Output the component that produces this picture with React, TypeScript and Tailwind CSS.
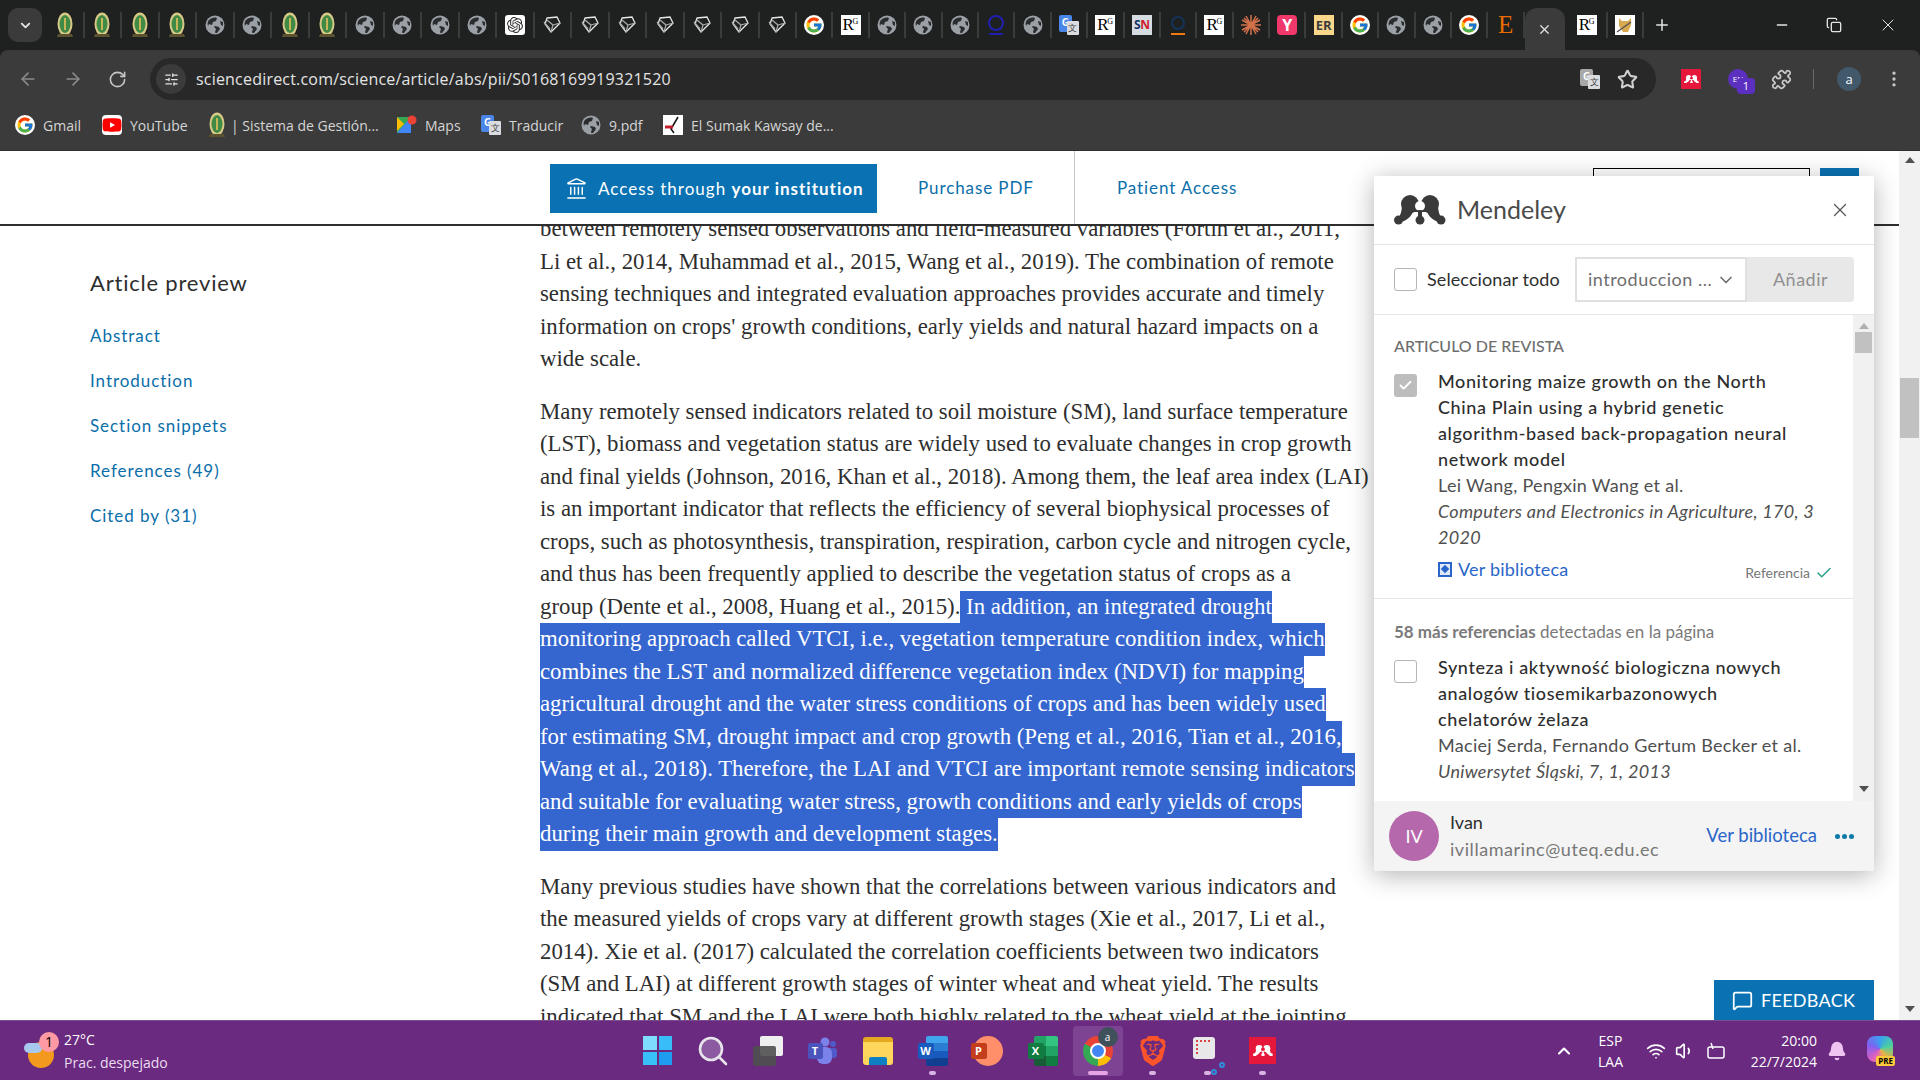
import { ArrowLeft, ArrowRight, RotateCw, Star, EllipsisVertical, Minus, Plus, X, Copy, ChevronDown, ChevronUp, Check, MessageSquare, Wifi, Volume1, Bell, Puzzle, SlidersHorizontal, Landmark } from "lucide-react";
import { SiBrave, SiOpenai } from "react-icons/si";
import { FcGoogle } from "react-icons/fc";
import { FaYoutube } from "react-icons/fa";

function Globe() {
  return (
    <svg width="20" height="20" viewBox="0 0 20 20">
      <circle cx="10" cy="10" r="9.5" fill="#9aa0a6" />
      <path d="M4 5c2-2 5-3 8-2l-1 3-3 1-1 3-3-1-1 2C2 8 3 6 4 5zM10 11l4 1 1 2-3 4c-1 0-2 0-2-1l1-3-2-2zM15 6l3 1 0 4-2-1z" fill="#2b2c2e" />
    </svg>
  );
}

function Seal() {
  return (
    <svg width="20" height="26" viewBox="0 0 20 26">
      <ellipse cx="10" cy="12" rx="7.5" ry="11.5" fill="#d9c987" />
      <ellipse cx="10" cy="12" rx="5.5" ry="9" fill="#3f8a45" />
      <path d="M10 6v12" stroke="#c9b458" strokeWidth="2" />
      <path d="M3 22h14l1 3H2z" fill="#5b5230" />
    </svg>
  );
}

function GoogleIcon() {
  return (
    <div className="flex items-center justify-center w-5 h-5 rounded-full bg-white">
      <FcGoogle size={18} />
    </div>
  );
}

function Rg() {
  return (
    <div className="relative w-5 h-5 bg-white text-black text-[17px] leading-5 pl-[2px] [font-family:'Liberation_Serif',serif]">
      R<span className="absolute left-[12px] top-[-3px] text-[8px]">G</span>
    </div>
  );
}

function Diamond() {
  return (
    <svg width="20" height="20" viewBox="0 0 20 20" fill="none" stroke="#e8e8e8" strokeWidth="1.3">
      <path d="M5 3l10-1 3 6-9 9-6-8z" />
      <path d="M5 5l6 5-2 7M2 7l6 7M18 8l-7 2" stroke="#a8a8a8" />
    </svg>
  );
}

function TranslateIcon({ grey }: { grey?: boolean }) {
  return (
    <div className="relative w-5 h-5">
      <div className={`absolute left-0 top-0 w-[13px] h-[17px] rounded-[2px] text-white text-[10px] leading-[15px] text-center font-bold ${grey ? "bg-[#a8a8a8]" : "bg-[#4a86e8]"}`}>G</div>
      <div className="absolute right-0 bottom-0 w-[12px] h-[14px] bg-[#dadce0] rounded-[1px] text-[#444] text-[9px] leading-[14px] text-center">文</div>
    </div>
  );
}

function MendeleyMark({ color, bg = "#fff", size = 52 }: { color: string; bg?: string; size?: number }) {
  return (
    <svg width={size} height={size * 0.58} viewBox="0 0 52 30">
      <circle cx="4.5" cy="25" r="4.5" fill={color} />
      <circle cx="26" cy="25" r="4.5" fill={color} />
      <circle cx="47" cy="25" r="4.5" fill={color} />
      <circle cx="16" cy="9" r="9" fill={color} />
      <circle cx="36" cy="9" r="9" fill={color} />
      <path d="M8 9c0 8-2 13-5 15l4 3c7-2 10-6 12-10h14c2 4 5 8 12 10l4-3c-3-2-5-7-5-15z" fill={color} />
      <circle cx="26" cy="11" r="5" fill={bg} />
      <path d="M26 15v9" stroke={color} strokeWidth="4" />
    </svg>
  );
}

function RedMendeley() {
  return (
    <div className="flex items-center justify-center w-5 h-5 bg-[#e5173b]">
      <MendeleyMark color="#fff" bg="#e5173b" size={15} />
    </div>
  );
}

function Favicon({ kind }: { kind: string }) {
  if (kind == "seal") return <Seal />;
  if (kind == "globe") return <Globe />;
  if (kind == "gpt")
    return (
      <div className="flex items-center justify-center w-5 h-5 bg-white rounded-[3px] text-[#333]">
        <SiOpenai size={16} />
      </div>
    );
  if (kind == "diamond") return <Diamond />;
  if (kind == "g") return <GoogleIcon />;
  if (kind == "rg") return <Rg />;
  if (kind == "tr") return <TranslateIcon />;
  if (kind == "hat")
    return (
      <svg width="20" height="22" viewBox="0 0 20 22" fill="none" stroke="#2020b0" strokeWidth="2">
        <circle cx="10" cy="9" r="7" />
        <path d="M3 20h14" />
      </svg>
    );
  if (kind == "sn")
    return (
      <div className="w-5 h-5 bg-[#d5dde3] text-[12px] leading-5 text-center font-bold tracking-tighter">
        <span className="text-[#14336b]">S</span>
        <span className="text-[#d01c2c]">N</span>
      </div>
    );
  if (kind == "dark")
    return (
      <svg width="20" height="22" viewBox="0 0 20 22" fill="none">
        <circle cx="10" cy="9" r="6" stroke="#12345a" strokeWidth="2" />
        <path d="M3 20h14" stroke="#f07a10" strokeWidth="2" />
      </svg>
    );
  if (kind == "star")
    return (
      <svg width="20" height="20" viewBox="0 0 20 20" stroke="#d2714a" strokeWidth="1.5">
        <path d="M10 0v20M0 10h20M3 3l14 14M17 3L3 17M5 1l10 18M15 1L5 19M1 5l18 10M19 5L1 15" />
      </svg>
    );
  if (kind == "y") return <div className="w-5 h-5 rounded-[4px] bg-[#f0386b] text-white text-[16px] leading-5 text-center font-bold">Y</div>;
  if (kind == "er") return <div className="w-5 h-5 bg-[#f8d68a] text-[#3b3b3b] text-[13px] leading-5 text-center font-bold">ER</div>;
  if (kind == "e") return <div className="w-5 h-6 text-[#e96a00] text-[25px] leading-6 text-center [font-family:'Liberation_Serif',serif]">E</div>;
  return (
    <div className="flex items-center justify-center w-5 h-5 bg-white">
      <svg width="18" height="20" viewBox="0 0 18 20">
        <path d="M3 3l3 3h6l3-3v7l-3 7H7l-4-6z" fill="#d9a94f" />
        <path d="M1 17l14-10" stroke="#555" strokeWidth="1.5" />
      </svg>
    </div>
  );
}

const firstTabs = ["seal", "seal", "seal", "seal", "globe", "globe", "seal", "seal", "globe", "globe", "globe", "globe", "gpt", "diamond", "diamond", "diamond", "diamond", "diamond", "diamond", "diamond"];
const secondTabs = ["g", "rg", "globe", "globe", "globe", "hat", "globe", "tr", "rg", "sn", "dark", "rg", "star", "y", "er", "g", "globe", "globe", "g", "e"];

function TabStrip() {
  return (
    <div className="flex items-end h-[50px] bg-[#1f2121] text-[#e3e3e3]">
      <div className="flex items-center self-center justify-center w-[34px] h-[34px] ml-2 mr-[5px] rounded-[10px] bg-[#3b3b3b]">
        <ChevronDown size={15} strokeWidth={3} />
      </div>
      {firstTabs.map((t, i) => (
        <div key={i} className="flex items-center justify-center self-center w-[37.5px] h-[26px] border-r-2 border-[#3a3b3b]">
          <Favicon kind={t} />
        </div>
      ))}
      {secondTabs.map((t, i) => (
        <div key={i} className="flex items-center justify-center self-center w-[36.4px] h-[26px] border-r-2 border-[#3a3b3b]">
          <Favicon kind={t} />
        </div>
      ))}
      <div className="flex items-center justify-center w-[40px] h-[42px] rounded-t-[12px] bg-[#3b3b3b]">
        <X size={15} />
      </div>
      <div className="flex items-center justify-center self-center w-[40px] ml-[3px] h-[26px] border-r-2 border-[#3a3b3b]">
        <Favicon kind="rg" />
      </div>
      <div className="flex items-center justify-center self-center w-[36px] h-[26px] border-r-2 border-[#3a3b3b]">
        <Favicon kind="cat" />
      </div>
      <div className="flex items-center self-center justify-center w-[36px]">
        <Plus size={18} />
      </div>
      <div className="flex items-center self-center gap-[36px] ml-auto pr-[22px]">
        <Minus size={16} />
        <Copy size={16} />
        <X size={20} strokeWidth={1.2} />
      </div>
    </div>
  );
}

function Toolbar() {
  return (
    <div className="flex items-center h-[50px] pt-2 rounded-t-lg bg-[#3b3b3b]">
      <div className="flex items-center gap-[25px] pl-[18px] w-[150px] text-[#8a8b8b]">
        <ArrowLeft size={20} />
        <ArrowRight size={20} />
        <RotateCw size={19} className="text-[#c7c7c7]" />
      </div>
      <div className="flex items-center w-[1506px] h-[42px] rounded-full bg-[#282828] pl-[6px] pr-[18px]">
        <div className="flex items-center justify-center w-[30px] h-[30px] rounded-full bg-[#3b3b3b] text-[#e3e3e3]">
          <SlidersHorizontal size={15} />
        </div>
        <span className="ml-[10px] text-[16px] text-[#e3e3e3] tracking-[0.2px]">sciencedirect.com/science/article/abs/pii/S0168169919321520</span>
        <div className="flex items-center gap-[17px] ml-auto text-[#d0d0d0]">
          <TranslateIcon grey />
          <Star size={21} strokeWidth={2.4} />
        </div>
      </div>
      <div className="flex items-center pl-[25px] text-[#c7c7c7]">
        <RedMendeley />
        <div className="relative w-5 h-5 ml-[27px] rounded-full bg-[#5b2fc0] text-[8px] leading-5 text-center text-white">
          EN
          <span className="absolute left-[9px] top-[9px] w-[18px] h-[16px] rounded-[4px] bg-[#5b2fc0] text-[11px] leading-4">1</span>
        </div>
        <Puzzle size={21} className="ml-[23px]" />
        <div className="w-px h-5 ml-[21px] bg-[#6a6a6a]" />
        <div className="w-6 h-6 ml-[23px] rounded-full bg-[#41596b] text-[13px] leading-6 text-center text-white">a</div>
        <EllipsisVertical size={20} className="ml-[23px]" />
      </div>
    </div>
  );
}

function Bookmark({ icon, label, className }: { icon: React.ReactNode; label: string; className: string }) {
  return (
    <div className={`flex items-center gap-2 ${className}`}>
      {icon}
      <span>{label}</span>
    </div>
  );
}

function BookmarksBar() {
  return (
    <div className="flex items-center h-[51px] pl-[15px] bg-[#3b3b3b] text-[14px] text-[#d5d5d5] border-b border-[#2e2e2e]">
      <Bookmark icon={<GoogleIcon />} label="Gmail" className="w-[87px]" />
      <Bookmark icon={<FaYoutube size={20} className="text-[#ff0000] bg-white rounded-[4px]" />} label="YouTube" className="w-[105px]" />
      <div className="flex items-center gap-1 w-[190px]">
        <Seal />
        <span>| Sistema de Gestión...</span>
      </div>
      <Bookmark
        icon={
          <svg width="20" height="20" viewBox="0 0 20 20">
            <path d="M0 2h14v16H0z" fill="#34a853" />
            <path d="M0 18l14-16v16z" fill="#4285f4" />
            <path d="M0 2l7 7-7 7z" fill="#fbbc04" />
            <circle cx="15" cy="5" r="4.5" fill="#ea4335" />
          </svg>
        }
        label="Maps"
        className="w-[84px]"
      />
      <Bookmark icon={<TranslateIcon />} label="Traducir" className="w-[100px]" />
      <Bookmark icon={<Globe />} label="9.pdf" className="w-[82px]" />
      <Bookmark
        icon={
          <svg width="20" height="20" viewBox="0 0 20 20">
            <rect width="20" height="20" fill="#fff" />
            <path d="M15 2L8 14l3 4" stroke="#111" strokeWidth="1.5" fill="none" />
            <path d="M2 12h8" stroke="#c2202c" strokeWidth="3" />
          </svg>
        }
        label="El Sumak Kawsay de..."
        className="w-[200px]"
      />
    </div>
  );
}

function ArticleHeader() {
  return (
    <div className="relative z-10 flex h-[75px] pl-[550px] bg-white border-b-2 border-[#2e2e2e] text-[#0a6eaa] text-[17px] tracking-[0.9px]">
      <div className="flex items-center gap-[10px] w-[327px] h-[49px] mt-[13px] pl-[15px] bg-[#0a72b3] text-white whitespace-nowrap tracking-[1px]">
        <Landmark size={23} strokeWidth={1.5} />
        <span>
          Access through <b>your institution</b>
        </span>
      </div>
      <div className="flex items-center pl-[41px] w-[198px] h-[73px] border-r border-[#c8c8c8]">Purchase PDF</div>
      <div className="flex items-center pl-[42px] w-[164px]">Patient Access</div>
      <div className="w-[217px] h-[40px] mt-[17px] ml-[354px] border border-black" />
      <div className="w-[39px] h-[45px] mt-[17px] ml-[10px] bg-[#0a72b3]" />
    </div>
  );
}

function Sidebar() {
  return (
    <div className="w-[540px] shrink-0 pt-[43px] pl-[90px] [font-family:Lato,sans-serif]">
      <h2 className="text-[22px] leading-7 tracking-[0.8px] text-[#2e2e2e]">Article preview</h2>
      <div className="flex flex-col gap-[15px] mt-[24px] text-[17px] leading-[30px] tracking-[0.95px] text-[#0a6eaa]">
        <span>Abstract</span>
        <span>Introduction</span>
        <span>Section snippets</span>
        <span>References (49)</span>
        <span>Cited by (31)</span>
      </div>
    </div>
  );
}

const para1 = [
  "between remotely sensed observations and field-measured variables (Fortin et al., 2011,",
  "Li et al., 2014, Muhammad et al., 2015, Wang et al., 2019). The combination of remote",
  "sensing techniques and integrated evaluation approaches provides accurate and timely",
  "information on crops' growth conditions, early yields and natural hazard impacts on a",
  "wide scale.",
];
const para2 = [
  "Many remotely sensed indicators related to soil moisture (SM), land surface temperature",
  "(LST), biomass and vegetation status are widely used to evaluate changes in crop growth",
  "and final yields (Johnson, 2016, Khan et al., 2018). Among them, the leaf area index (LAI)",
  "is an important indicator that reflects the efficiency of several biophysical processes of",
  "crops, such as photosynthesis, transpiration, respiration, carbon cycle and nitrogen cycle,",
  "and thus has been frequently applied to describe the vegetation status of crops as a",
];
const selected = [
  "monitoring approach called VTCI, i.e., vegetation temperature condition index, which",
  "combines the LST and normalized difference vegetation index (NDVI) for mapping",
  "agricultural drought and the water stress conditions of crops and has been widely used",
  "for estimating SM, drought impact and crop growth (Peng et al., 2016, Tian et al., 2016,",
  "Wang et al., 2018). Therefore, the LAI and VTCI are important remote sensing indicators",
  "and suitable for evaluating water stress, growth conditions and early yields of crops",
  "during their main growth and development stages.",
];
const para3 = [
  "Many previous studies have shown that the correlations between various indicators and",
  "the measured yields of crops vary at different growth stages (Xie et al., 2017, Li et al.,",
  "2014). Xie et al. (2017) calculated the correlation coefficients between two indicators",
  "(SM and LAI) at different growth stages of winter wheat and wheat yield. The results",
];

function Line({ text }: { text: string }) {
  return <div className="h-[32.5px]">{text}</div>;
}

function SelectedLine({ text }: { text: string }) {
  return (
    <div className="h-[32.5px]">
      <span className="inline-block h-[32.5px] bg-[#3566d0] text-white">{text}</span>
    </div>
  );
}

function Article() {
  return (
    <div className="-mt-[13px] w-[820px] whitespace-nowrap text-[22.8px] leading-[32.5px] text-[#2e2e2e] [font-family:'Liberation_Serif',serif]">
      <div className="mb-5">
        {para1.map((l, i) => (
          <Line key={i} text={l} />
        ))}
      </div>
      <div className="mb-5">
        {para2.map((l, i) => (
          <Line key={i} text={l} />
        ))}
        <div className="h-[32.5px]">
          group (Dente et al., 2008, Huang et al., 2015).
          <span className="inline-block h-[32.5px] bg-[#3566d0] text-white whitespace-pre"> In addition, an integrated drought</span>
        </div>
        {selected.map((l, i) => (
          <SelectedLine key={i} text={l} />
        ))}
      </div>
      {para3.map((l, i) => (
        <Line key={i} text={l} />
      ))}
      {/* last line runs under the taskbar; only its top half shows */}
      <div className="h-[20px] overflow-hidden">indicated that SM and the LAI were both highly related to the wheat yield at the jointing</div>
    </div>
  );
}

function CheckBox({ checked }: { checked?: boolean }) {
  return checked ? (
    <div className="flex items-center justify-center w-[23px] h-[23px] shrink-0 rounded-[3px] bg-[#bdbdbd] text-white">
      <Check size={15} strokeWidth={3} />
    </div>
  ) : (
    <div className="w-[23px] h-[23px] shrink-0 rounded-[3px] border border-[#b5b5b5] bg-white" />
  );
}

function MendeleyPanel() {
  return (
    <div className="absolute z-20 left-[1374px] top-[25px] flex flex-col w-[500px] h-[695px] bg-white shadow-[0_4px_24px_rgba(0,0,0,0.3)] [font-family:Lato,sans-serif]">
      <div className="flex items-center h-[69px] px-5 border-b border-[#e6e6e6] shrink-0">
        <MendeleyMark color="#3a3a3a" />
        <span className="ml-[11px] text-[25px] text-[#4a4a4a]">Mendeley</span>
        <X size={22} strokeWidth={1.4} className="ml-auto mr-[3px] text-[#555]" />
      </div>
      <div className="flex items-center h-[70px] pl-5 border-b border-[#e6e6e6] shrink-0">
        <CheckBox />
        <span className="ml-[10px] w-[148px] text-[18px] tracking-[0.1px] text-[#2e2e2e] whitespace-nowrap">Seleccionar todo</span>
        <div className="flex items-center w-[172px] h-[45px] pl-[11px] pr-[9px] border-2 border-[#e0e0e0] text-[18px] tracking-[0.5px] text-[#6e6e6e] whitespace-nowrap">
          introduccion ...
          <ChevronDown size={20} className="ml-auto" />
        </div>
        <div className="flex items-center justify-center w-[107px] h-[45px] rounded-r-[4px] bg-[#e8e8e8] text-[18px] tracking-[0.5px] text-[#8f8f8f]">Añadir</div>
      </div>
      <div className="flex flex-1 min-h-0">
        <div className="flex-1 overflow-hidden">
          <div className="h-[284px] pl-5 border-b border-[#e6e6e6]">
            <div className="pt-[21px] text-[16px] leading-5 text-[#6e6e6e] font-medium">ARTICULO DE REVISTA</div>
            <div className="flex mt-[12px]">
              <div className="w-[44px] pt-[6px] shrink-0">
                <CheckBox checked />
              </div>
              <div className="text-[18px] leading-[26px] tracking-[0.3px]">
                <div className="font-medium tracking-[0.6px] text-[#2e2e2e] w-[350px]">Monitoring maize growth on the North China Plain using a hybrid genetic algorithm-based back-propagation neural network model</div>
                <div className="text-[#4f4f4f]">Lei Wang, Pengxin Wang et al.</div>
                <div className="italic text-[#4f4f4f] whitespace-nowrap">
                  Computers and Electronics in Agriculture, 170, 3
                  <br />
                  2020
                </div>
              </div>
            </div>
            <div className="flex items-center mt-[5px] pl-[44px] pr-[20px] text-[18px]">
              <div className="flex items-center justify-center w-[14px] h-[15px] border-2 border-[#2a66c9] bg-[#dfe9f9]">
                <i className="w-[6px] h-[6px] bg-[#2a66c9] rotate-45" />
              </div>
              <span className="ml-[6px] tracking-[0.2px] text-[#2a66c9]">Ver biblioteca</span>
              <span className="ml-auto mt-[7px] text-[14px] text-[#777]">Referencia</span>
              <Check size={18} className="ml-[5px] mt-[7px] text-[#29a08a]" />
            </div>
          </div>
          <div className="pl-5 pt-[23px]">
            <div className="text-[17px] leading-5 text-[#7a7a7a]">
              <b className="font-bold">58 más referencias</b> detectadas en la página
            </div>
            <div className="flex mt-[12px]">
              <div className="w-[44px] pt-[6px] shrink-0">
                <CheckBox />
              </div>
              <div className="text-[18px] leading-[26px] tracking-[0.3px]">
                <div className="font-medium tracking-[0.6px] text-[#2e2e2e] w-[350px]">Synteza i aktywność biologiczna nowych analogów tiosemikarbazonowych chelatorów żelaza</div>
                <div className="text-[#4f4f4f]">Maciej Serda, Fernando Gertum Becker et al.</div>
                <div className="italic text-[#4f4f4f]">Uniwersytet Śląski, 7, 1, 2013</div>
              </div>
            </div>
          </div>
        </div>
        <div className="flex flex-col items-center w-[21px] bg-[#f1f1f1] shrink-0 text-[#6b6b6b]">
          <span className="mt-[8px] w-0 h-0 border-x-[5px] border-x-transparent border-b-[6px] border-b-[#b0b0b0]" />
          <span className="mt-[3px] w-[17px] h-[21px] bg-[#c1c1c1]" />
          <span className="mt-auto mb-[9px] w-0 h-0 border-x-[5px] border-x-transparent border-t-[6px] border-t-[#505050]" />
        </div>
      </div>
      <div className="flex items-center h-[70px] pl-[15px] bg-[#f4f4f4] shrink-0">
        <div className="flex items-center justify-center w-[50px] h-[50px] rounded-full bg-[#b568ac] text-[18px] text-white">IV</div>
        <div className="ml-[11px] text-[18px] leading-[27px]">
          <div className="text-[#2e2e2e]">Ivan</div>
          <div className="tracking-[0.55px] text-[#777]">ivillamarinc@uteq.edu.ec</div>
        </div>
        <span className="ml-auto text-[18.5px] text-[#2a66c9]">Ver biblioteca</span>
        <span className="flex gap-[2px] ml-[18px] mr-[20px]">
          <i className="w-[5px] h-[5px] rounded-full bg-[#0a7aa8]" />
          <i className="w-[5px] h-[5px] rounded-full bg-[#0a7aa8]" />
          <i className="w-[5px] h-[5px] rounded-full bg-[#0a7aa8]" />
        </span>
      </div>
    </div>
  );
}

function PageScrollbar() {
  return (
    <div className="absolute z-30 right-0 top-0 bottom-0 flex flex-col items-center w-[21px] bg-[#f1f1f1]">
      <span className="mt-[6px] w-0 h-0 border-x-[5px] border-x-transparent border-b-[6px] border-b-[#505050]" />
      <span className="mt-[215px] w-[19px] h-[60px] bg-[#c1c1c1]" />
      <span className="mt-auto mb-[8px] w-0 h-0 border-x-[5px] border-x-transparent border-t-[6px] border-t-[#505050]" />
    </div>
  );
}

function TaskIcon({ children, dot, active }: { children: React.ReactNode; dot?: boolean; active?: boolean }) {
  return (
    <div className={`relative flex items-center justify-center w-[50px] h-[50px] mx-[2.5px] rounded-[4px] ${active ? "bg-[#7d4494]" : ""}`}>
      {children}
      {dot && <span className="absolute bottom-[1px] w-[7px] h-[4px] rounded-full bg-[#d8b4e2]" />}
      {active && <span className="absolute bottom-[1px] w-5 h-1 rounded-full bg-[#e6a6e6]" />}
    </div>
  );
}

function WordIcon() {
  return (
    <div className="relative w-[30px] h-[30px]">
      <div className="absolute right-0 top-0 flex flex-col w-[22px] h-[30px] overflow-hidden rounded-[2px]">
        <i className="flex-1 bg-[#41a5ee]" />
        <i className="flex-1 bg-[#2b7cd3]" />
        <i className="flex-1 bg-[#185abd]" />
        <i className="flex-1 bg-[#103f91]" />
      </div>
      <span className="absolute left-0 top-[7px] w-4 h-4 rounded-[2px] bg-[#185abd] text-[11px] leading-4 text-center text-white font-bold">W</span>
    </div>
  );
}

function ExcelIcon() {
  return (
    <div className="relative w-[30px] h-[30px]">
      <div className="absolute right-0 top-0 grid grid-cols-2 w-[24px] h-[30px] overflow-hidden rounded-[2px]">
        <i className="bg-[#21a366]" />
        <i className="bg-[#33c481]" />
        <i className="bg-[#107c41]" />
        <i className="bg-[#21a366]" />
        <i className="bg-[#185c37]" />
        <i className="bg-[#107c41]" />
      </div>
      <span className="absolute left-0 top-[7px] w-4 h-4 rounded-[2px] bg-[#107c41] text-[11px] leading-4 text-center text-white font-bold">X</span>
    </div>
  );
}

function Taskbar() {
  return (
    <div className="relative z-40 flex items-center h-[60px] bg-[#692a80] text-white border-t border-[#7d4b90]">
      <div className="relative flex items-center w-[630px] h-full pl-[25px] text-[14px] leading-[23px]">
        <div className="relative w-[34px] h-[38px]">
          <div className="absolute left-[3px] top-[10px] w-[26px] h-[26px] rounded-full bg-[#f39a1e]" />
          <div className="absolute left-[-1px] top-[11px] w-[18px] h-[10px] rounded-full bg-[#a8c8f0]" />
          <div className="absolute left-[14px] top-0 w-[20px] h-[20px] rounded-full bg-[#ff9aa5] text-black text-[14px] leading-5 text-center">1</div>
        </div>
        <div className="ml-[5px]">
          <div>27°C</div>
          <div className="text-[#ecdcf0]">Prac. despejado</div>
        </div>
      </div>
      <TaskIcon>
        <div className="grid grid-cols-2 gap-[2px] w-[29px] h-[29px]">
          <i className="bg-[#7fdcfc]" />
          <i className="bg-[#38bdf8]" />
          <i className="bg-[#38c0f8]" />
          <i className="bg-[#1e9cf0]" />
        </div>
      </TaskIcon>
      <TaskIcon>
        <svg width="30" height="30" viewBox="0 0 30 30" fill="#8c5aa0" stroke="#e8e4ec" strokeWidth="2.6">
          <circle cx="13" cy="13" r="11" />
          <path d="M21 21l7 7" strokeLinecap="round" />
        </svg>
      </TaskIcon>
      <TaskIcon>
        <div className="relative w-[30px] h-[30px]">
          <div className="absolute right-0 top-0 w-[23px] h-[20px] bg-[#efefef] rounded-[2px]" />
          <div className="absolute left-0 bottom-0 w-[23px] h-[20px] bg-[#4f4f4f] opacity-90 rounded-[2px]" />
        </div>
      </TaskIcon>
      <TaskIcon>
        <svg width="30" height="30" viewBox="0 0 30 30">
          <circle cx="17" cy="6" r="4.5" fill="#7b83eb" />
          <circle cx="25" cy="8" r="3" fill="#5059c9" />
          <rect x="20" y="12" width="9" height="10" rx="3" fill="#5059c9" />
          <rect x="9" y="11" width="15" height="17" rx="6" fill="#7b83eb" />
        </svg>
        <span className="absolute left-[10px] top-[17px] w-[15px] h-[16px] rounded-[2px] bg-[#4b53bc] text-[11px] leading-4 text-center font-bold">T</span>
      </TaskIcon>
      <TaskIcon>
        <div className="relative w-[30px] h-[28px] rounded-[3px] border-t-[5px] border-[#e5a820] bg-[#ffd65c]">
          <span className="absolute left-[6px] bottom-0 w-[18px] h-[8px] rounded-t-[2px] bg-[#0f7fc4]" />
        </div>
      </TaskIcon>
      <TaskIcon dot>
        <WordIcon />
      </TaskIcon>
      <TaskIcon>
        <div className="relative w-[30px] h-[30px] rounded-full bg-[#ff8f6b]">
          <span className="absolute left-[-2px] top-[7px] w-4 h-4 rounded-[2px] bg-[#c43e1c] text-[11px] leading-4 text-center font-bold">P</span>
        </div>
      </TaskIcon>
      <TaskIcon>
        <ExcelIcon />
      </TaskIcon>
      <TaskIcon active>
        <div className="relative w-[30px] h-[30px] rounded-full bg-[conic-gradient(#ea4335_0_33%,#fbbc04_33%_50%,#34a853_50%_83%,#ea4335_83%_100%)]">
          <span className="absolute left-[7px] top-[7px] w-4 h-4 rounded-full bg-[#4285f4] border-2 border-white" />
          <span className="absolute left-[15px] top-[-9px] w-5 h-5 rounded-full bg-[#41515c] text-[10px] leading-5 text-center">a</span>
        </div>
      </TaskIcon>
      <TaskIcon dot>
        <SiBrave size={30} className="text-[#fb542b]" />
      </TaskIcon>
      <TaskIcon dot>
        <div className="relative w-[22px] h-[22px] -ml-2 -mt-[6px] rounded-[3px] bg-[#e8e8e8]">
          <span className="absolute left-[3px] top-[3px] w-[14px] h-[14px] border-t-2 border-l-2 border-dotted border-[#d44]" />
          <span className="absolute right-[-10px] bottom-[-9px] w-[6px] h-[6px] border-2 border-[#2f8fdc] rounded-full" />
          <span className="absolute right-[-2px] bottom-[-16px] w-[6px] h-[6px] border-2 border-[#2f8fdc] rounded-full" />
        </div>
      </TaskIcon>
      <TaskIcon dot>
        <div className="flex items-center justify-center w-[27px] h-[27px] bg-[#e5173b]">
          <MendeleyMark color="#fff" bg="#e5173b" size={20} />
        </div>
      </TaskIcon>
      <div className="flex items-center ml-auto h-full">
        <ChevronUp size={20} strokeWidth={2.5} />
        <div className="ml-[24px] text-[14px] leading-[21px] text-center">
          <div>ESP</div>
          <div>LAA</div>
        </div>
        <Wifi size={20} className="ml-[23px]" />
        <Volume1 size={20} className="ml-[9px]" />
        <svg width="20" height="20" viewBox="0 0 20 20" fill="none" stroke="#fff" strokeWidth="1.5" className="ml-[11px]">
          <rect x="2" y="6" width="16" height="11" rx="2" />
          <path d="M5 2l2 6" />
        </svg>
        <div className="ml-[17px] w-[74px] text-right text-[14px] leading-[21px]">
          <div>20:00</div>
          <div>22/7/2024</div>
        </div>
        <Bell size={20} fill="#f0c4f0" className="ml-[10px] text-[#f0c4f0]" />
        <div className="relative w-[28px] h-[30px] ml-[20px] mr-[25px]">
          <div className="w-[26px] h-[26px] rounded-[8px] bg-[conic-gradient(#3aa0f0,#4ad0a0,#f0b040,#e060c0,#8060f0,#3aa0f0)]" />
          <span className="absolute right-0 bottom-0 px-[2px] rounded-[2px] bg-[#ffc83d] text-black text-[8px] leading-[10px] font-bold">PRE</span>
        </div>
      </div>
    </div>
  );
}

export default function App() {
  return (
    <div className="flex flex-col h-screen overflow-hidden bg-[#1f2121] [font-family:'Open_Sans',sans-serif]">
      <TabStrip />
      <Toolbar />
      <BookmarksBar />
      <div className="relative flex-1 min-h-0 overflow-hidden bg-white">
        <div className="[font-family:Lato,sans-serif]">
          <ArticleHeader />
        </div>
        <div className="flex">
          <Sidebar />
          <Article />
        </div>
        <MendeleyPanel />
        <div className="absolute z-20 right-[46px] bottom-0 flex items-center gap-2 w-[160px] h-10 pl-[18px] bg-[#0a72b3] text-white text-[18px] tracking-[0.3px] [font-family:Lato,sans-serif]">
          <MessageSquare size={21} />
          FEEDBACK
        </div>
        <PageScrollbar />
      </div>
      <Taskbar />
    </div>
  );
}
